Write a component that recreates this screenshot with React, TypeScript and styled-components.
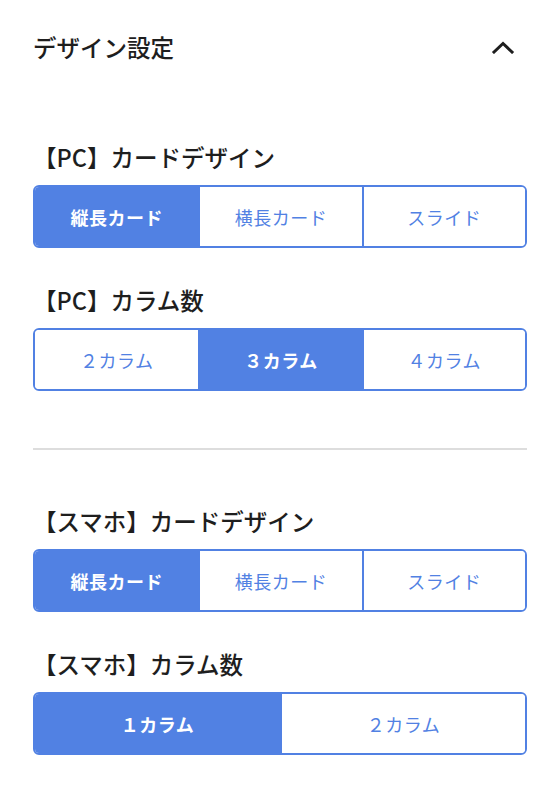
import React, { useState } from "react";
import styled, { createGlobalStyle } from "styled-components";

const GlobalStyle = createGlobalStyle`
  html, body {
    margin: 0;
    padding: 0;
    background: #ffffff;
  }
  body {
    font-family: "Noto Sans CJK JP", "Noto Sans", sans-serif;
    color: #1e1e1e;
  }
`;

const Panel = styled.div`
  width: 560px;
  box-sizing: border-box;
  padding: 32px 33px 30px;
`;

const Header = styled.div`
  display: flex;
  align-items: center;
  justify-content: space-between;
  height: 30px;
  margin-bottom: 80px;
`;

const HeaderTitle = styled.h2`
  margin: 0;
  font-size: 23.5px;
  line-height: 30px;
  font-weight: 500;
  color: #1e1e1e;
`;

const Chevron = styled.svg`
  width: 24px;
  height: 14px;
  margin-right: 12px;
`;

const Section = styled.div`
  display: flex;
  flex-direction: column;
`;

const Field = styled.div<{ $gap?: number }>`
  display: flex;
  flex-direction: column;
  margin-bottom: ${(p) => p.$gap ?? 37}px;
`;

const FieldTitle = styled.h3`
  margin: 0 0 13px;
  font-size: 23.5px;
  line-height: 30px;
  font-weight: 500;
  color: #1e1e1e;
`;

const Group = styled.div<{ $cols: number }>`
  display: grid;
  grid-template-columns: repeat(${(p) => p.$cols}, 1fr);
  height: 63px;
  box-sizing: border-box;
  border: 2px solid #5181e3;
  border-radius: 6px;
  overflow: hidden;
`;

const Option = styled.button<{ $active: boolean }>`
  display: flex;
  align-items: center;
  justify-content: center;
  border: none;
  border-left: 2px solid #5181e3;
  margin: 0;
  padding: 0;
  font-family: inherit;
  font-size: 18px;
  font-weight: ${(p) => (p.$active ? 700 : 400)};
  color: ${(p) => (p.$active ? "#ffffff" : "#5181e3")};
  background: ${(p) => (p.$active ? "#5181e3" : "#ffffff")};
  letter-spacing: 0.5px;
  cursor: pointer;

  &:first-child {
    border-left: none;
  }
`;

const Divider = styled.hr`
  margin: 0 0 56px;
  border: none;
  border-top: 2px solid #dddddd;
`;

type SegmentProps = {
  options: string[];
  initial: number;
};

const Segment: React.FC<SegmentProps> = ({ options, initial }) => {
  const [selected, setSelected] = useState(initial);
  return (
    <Group $cols={options.length}>
      {options.map((label, i) => (
        <Option key={label} $active={i === selected} onClick={() => setSelected(i)}>
          {label}
        </Option>
      ))}
    </Group>
  );
};

const cardOptions = ["縦長カード", "横長カード", "スライド"];

const App: React.FC = () => {
  return (
    <>
      <GlobalStyle />
      <Panel>
        <Header>
          <HeaderTitle>デザイン設定</HeaderTitle>
          <Chevron viewBox="0 0 24 14" fill="none">
            <path d="M3 12 L12 3.5 L21 12" stroke="#1e1e1e" strokeWidth="3" strokeLinecap="square" />
          </Chevron>
        </Header>
        <Section>
          <Field>
            <FieldTitle>【PC】カードデザイン</FieldTitle>
            <Segment options={cardOptions} initial={0} />
          </Field>
          <Field $gap={57}>
            <FieldTitle>【PC】カラム数</FieldTitle>
            <Segment options={["２カラム", "３カラム", "４カラム"]} initial={1} />
          </Field>
          <Divider />
          <Field>
            <FieldTitle>【スマホ】カードデザイン</FieldTitle>
            <Segment options={cardOptions} initial={0} />
          </Field>
          <Field $gap={0}>
            <FieldTitle>【スマホ】カラム数</FieldTitle>
            <Segment options={["１カラム", "２カラム"]} initial={0} />
          </Field>
        </Section>
      </Panel>
    </>
  );
};

export default App;
